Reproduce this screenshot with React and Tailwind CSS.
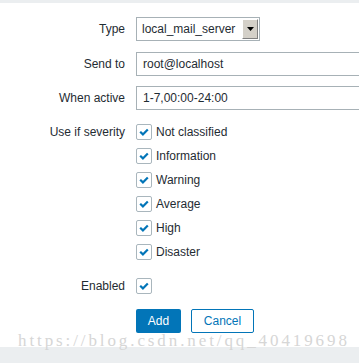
import React from 'react';

const severities = ['Not classified', 'Information', 'Warning', 'Average', 'High', 'Disaster'];

const Check = () => (
  <span className="flex items-center justify-center w-[16px] h-[16px] border border-[#a9b6bd] rounded-[2px] bg-white">
    <svg width="10" height="8" viewBox="0 0 10 8">
      <path d="M1.2 3.8 L3.9 6.4 L8.8 1.4" fill="none" stroke="#0275b8" strokeWidth="2.2" />
    </svg>
  </span>
);

const Label = ({ children }) => (
  <div className="w-[125px] pr-[0px] text-right text-[#1f2c33] shrink-0">{children}</div>
);

const App = () => {
  return (
    <div
      className="relative w-[359px] h-[363px] bg-white flex flex-col overflow-hidden text-[12px] text-[#1f2c33]"
      style={{ fontFamily: '"Liberation Sans", Arial, sans-serif' }}
    >
      <div className="h-[3px] bg-[#ebeef0]" />

      <div className="flex-1 flex flex-col pt-[14px]">
        {/* Type */}
        <div className="flex items-center gap-[11px] h-[24px]">
          <Label>Type</Label>
          <div className="flex items-center w-[124px] h-[24px] border border-[#a7b1b6] bg-white pl-[5px] pr-[1px]">
            <span className="flex-1">local_mail_server</span>
            <span className="flex items-center justify-center w-[16px] h-[20px] bg-[#d4d0c8] border-t border-l border-t-white border-l-white border-b border-r border-b-[#808080] border-r-[#808080]">
              <svg width="7" height="4" viewBox="0 0 7 4">
                <path d="M0 0 H7 L3.5 4 Z" fill="#000" />
              </svg>
            </span>
          </div>
        </div>

        {/* Send to */}
        <div className="flex items-center gap-[11px] h-[24px] mt-[11px]">
          <Label>Send to</Label>
          <div className="flex-1 h-[24px] border border-[#a7b1b6] border-r-0 flex items-center pl-[6px]">
            root@localhost
          </div>
        </div>

        {/* When active */}
        <div className="flex items-center gap-[11px] h-[24px] mt-[10px]">
          <Label>When active</Label>
          <div className="flex-1 h-[24px] border border-[#a7b1b6] border-r-0 flex items-center pl-[6px]">
            1-7,00:00-24:00
          </div>
        </div>

        {/* Use if severity */}
        <div className="flex items-start gap-[11px] mt-[10px]">
          <div className="h-[24px] flex items-center">
            <Label>Use if severity</Label>
          </div>
          <div className="flex flex-col">
            {severities.map((s) => (
              <div key={s} className="flex items-center gap-[4px] h-[24px]">
                <Check />
                <span>{s}</span>
              </div>
            ))}
          </div>
        </div>

        {/* Enabled */}
        <div className="flex items-center gap-[11px] h-[24px] mt-[10px]">
          <Label>Enabled</Label>
          <Check />
        </div>

        {/* Buttons */}
        <div className="flex items-center gap-[10px] mt-[11px] pl-[136px]">
          <button className="w-[45px] h-[24px] bg-[#0275b8] text-white rounded-[2px]">Add</button>
          <button className="w-[63px] h-[24px] border border-[#0275b8] text-[#0275b8] bg-white rounded-[2px]">
            Cancel
          </button>
        </div>
      </div>

      <div className="h-[16px] bg-[#ebeef0]" />

      {/* watermark */}
      <div
        className="absolute left-[18px] top-[331px] text-[17px] leading-[20px] text-[#d6d6d6] tracking-[2.9px] whitespace-nowrap"
        style={{ fontFamily: '"Liberation Serif", serif' }}
      >
        https://blog.csdn.net/qq_40419698
      </div>
    </div>
  );
};

export default App;
